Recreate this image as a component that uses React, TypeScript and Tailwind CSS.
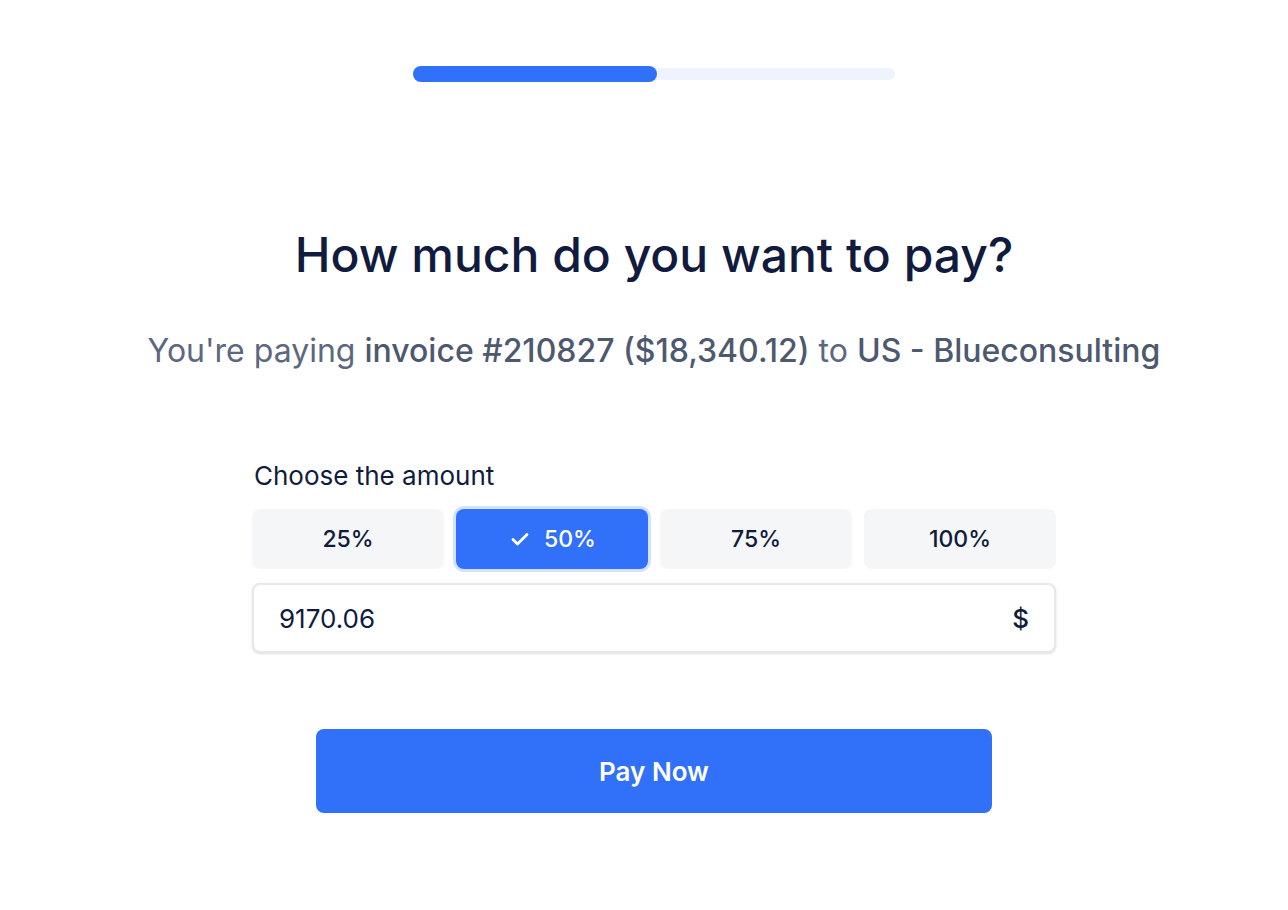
import { useState } from "react"

const options = [25, 50, 75, 100]

export default function App() {
  const [selected, setSelected] = useState<number>(50)
  const total = 18340.12
  const amount = ((total * selected) / 100).toFixed(2)

  return (
    <div className="min-h-screen bg-white pl-5 font-['Inter',sans-serif] text-[#101b3d]">
      <div className="flex flex-col items-center pt-[66px]">
        {/* progress */}
        <div className="relative flex h-4 w-[482px] items-center">
          <div className="h-3 w-full rounded-full bg-[#eef3fe]"></div>
          <div className="absolute left-0 top-0 h-4 w-[244px] rounded-full bg-[#3170f8]"></div>
        </div>

        <h1 className="mt-[144px] text-[48px] leading-[58px] font-medium">How much do you want to pay?</h1>
        <p className="mt-[47px] text-[32px] leading-[40px] text-[#5d6780]">
          You're paying <span className="font-medium text-[#4e5970]">invoice #210827 ($18,340.12)</span> to{" "}
          <span className="font-medium text-[#4e5970]">US - Blueconsulting</span>
        </p>

        <div className="mt-[88px] w-[804px]">
          <div className="pl-[2px] text-[26px] leading-[34px]">Choose the amount</div>
          <div className="mt-[16px] grid grid-cols-4 gap-3">
            {options.map((o) => {
              const on = o === selected
              return (
                <button
                  key={o}
                  onClick={() => setSelected(o)}
                  className={
                    on
                      ? "flex h-[60px] items-center justify-center gap-3 rounded-lg bg-[#3170f8] text-[23px] font-medium text-white ring-[3px] ring-[#d4e2fd]"
                      : "flex h-[60px] items-center justify-center rounded-lg bg-[#f5f6f8] text-[23px] font-medium text-[#101b3d]"
                  }
                >
                  {on && (
                    <svg viewBox="0 0 24 24" className="h-[24px] w-[24px]" fill="none" stroke="currentColor" strokeWidth={2.8} strokeLinecap="round" strokeLinejoin="round">
                      <path d="M5 12.5l4.5 4.5L19 7.5" />
                    </svg>
                  )}
                  {o}%
                </button>
              )
            })}
          </div>
          <div className="mt-[14px] flex h-[70px] items-center justify-between rounded-lg border-2 border-[#e7e8ec] bg-white px-[25px] shadow-sm">
            <span className="text-[26px]">{amount}</span>
            <span className="text-[26px] font-medium">$</span>
          </div>
        </div>

        <button className="mt-[76px] h-[84px] w-[676px] rounded-lg bg-[#3170f8] text-[26px] font-semibold text-white">Pay Now</button>
      </div>
    </div>
  )
}
